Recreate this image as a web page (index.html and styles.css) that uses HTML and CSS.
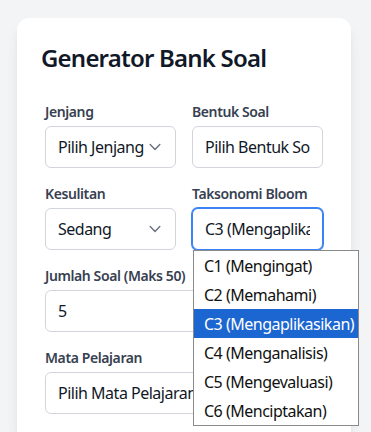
FILE: index.html
```html
<!DOCTYPE html>
<html lang="id">
<head>
<meta charset="utf-8">
<title>Generator Bank Soal</title>
<link rel="stylesheet" href="styles.css">
</head>
<body>
<div class="card">
  <h1 class="title">Generator Bank Soal</h1>
  <form class="form">
    <div class="grid">
      <div class="group">
        <label class="label">Jenjang</label>
        <div class="field has-chevron">
          <span class="value">Pilih Jenjang</span>
          <svg class="chevron" viewBox="0 0 20 20" width="24" height="24"><path d="M6 8l4 4 4-4" fill="none" stroke="#6b7280" stroke-width="1.2" stroke-linecap="round" stroke-linejoin="round"/></svg>
        </div>
      </div>
      <div class="group">
        <label class="label">Bentuk Soal</label>
        <div class="field"><span class="value">Pilih Bentuk Soal</span></div>
      </div>
      <div class="group">
        <label class="label">Kesulitan</label>
        <div class="field has-chevron">
          <span class="value">Sedang</span>
          <svg class="chevron" viewBox="0 0 20 20" width="24" height="24"><path d="M6 8l4 4 4-4" fill="none" stroke="#6b7280" stroke-width="1.2" stroke-linecap="round" stroke-linejoin="round"/></svg>
        </div>
      </div>
      <div class="group">
        <label class="label">Taksonomi Bloom</label>
        <div class="field focused"><span class="value">C3 (Mengaplikasikan)</span></div>
      </div>
      <div class="group wide">
        <label class="label">Jumlah Soal (Maks 50)</label>
        <div class="field"><span class="value">5</span></div>
      </div>
      <div class="group wide">
        <label class="label">Mata Pelajaran</label>
        <div class="field has-chevron">
          <span class="value">Pilih Mata Pelajaran</span>
          <svg class="chevron" viewBox="0 0 20 20" width="24" height="24"><path d="M6 8l4 4 4-4" fill="none" stroke="#6b7280" stroke-width="1.2" stroke-linecap="round" stroke-linejoin="round"/></svg>
        </div>
      </div>
    </div>
  </form>
</div>
<ul class="popup">
  <li class="option">C1 (Mengingat)</li>
  <li class="option">C2 (Memahami)</li>
  <li class="option selected">C3 (Mengaplikasikan)</li>
  <li class="option">C4 (Menganalisis)</li>
  <li class="option">C5 (Mengevaluasi)</li>
  <li class="option">C6 (Menciptakan)</li>
</ul>
</body>
</html>
```

FILE: styles.css
```css
* { box-sizing: border-box; }
html, body { margin: 0; padding: 0; }
body {
  background: #f3f4f6;
  font-family: "Noto Sans", "Open Sans", sans-serif;
  color: #111827;
  height: 432px;
  overflow: hidden;
  position: relative;
}
.card {
  margin: 18px 20px 0 17px;
  background: #ffffff;
  border-radius: 12px;
  padding: 24px 24px 24px 24px;
  box-shadow: 0 10px 15px -3px rgba(0,0,0,0.1), 0 4px 6px -4px rgba(0,0,0,0.1);
}
.title {
  margin: 0 0 24px 0;
  font-size: 24px;
  line-height: 32px;
  font-weight: 600;
  color: #111827;
  letter-spacing: -0.8px;
}
.form { padding: 4px; }
.grid {
  display: grid;
  grid-template-columns: 1fr 1fr;
  column-gap: 16px;
  row-gap: 16px;
}
.group { display: flex; flex-direction: column; min-width: 0; }
.group.wide { grid-column: span 2; }
.label {
  display: block;
  font-size: 14px;
  line-height: 20px;
  font-weight: 600;
  color: #374151;
  margin-bottom: 4px;
  letter-spacing: -0.4px;
  white-space: nowrap;
}
.field {
  position: relative;
  height: 42px;
  border: 1px solid #d1d5db;
  border-radius: 6px;
  background: #ffffff;
  padding: 8px 12px;
  font-size: 16px;
  line-height: 24px;
  color: #111827;
  display: flex;
  align-items: center;
}
.field.has-chevron { padding-right: 27px; }
.field.focused {
  border-color: #3b82f6;
  box-shadow: 0 0 0 1px #3b82f6;
}
.value {
  display: block;
  overflow: hidden;
  white-space: nowrap;
  letter-spacing: -0.5px;
  flex: 1;
  min-width: 0;
}
.chevron {
  position: absolute;
  right: 8px;
  top: 50%;
  margin-top: -12px;
}
.popup {
  position: absolute;
  left: 193px;
  top: 250px;
  width: 166px;
  margin: 0;
  padding: 0;
  list-style: none;
  background: #ffffff;
  border: 1px solid #8a8a8a;
}
.option {
  height: 29px;
  padding: 0 0 0 10px;
  display: flex;
  align-items: center;
  font-size: 16px;
  color: #111111;
  letter-spacing: -0.5px;
  white-space: nowrap;
}
.option.selected {
  background: #1c66d2;
  color: #ffffff;
}
```
